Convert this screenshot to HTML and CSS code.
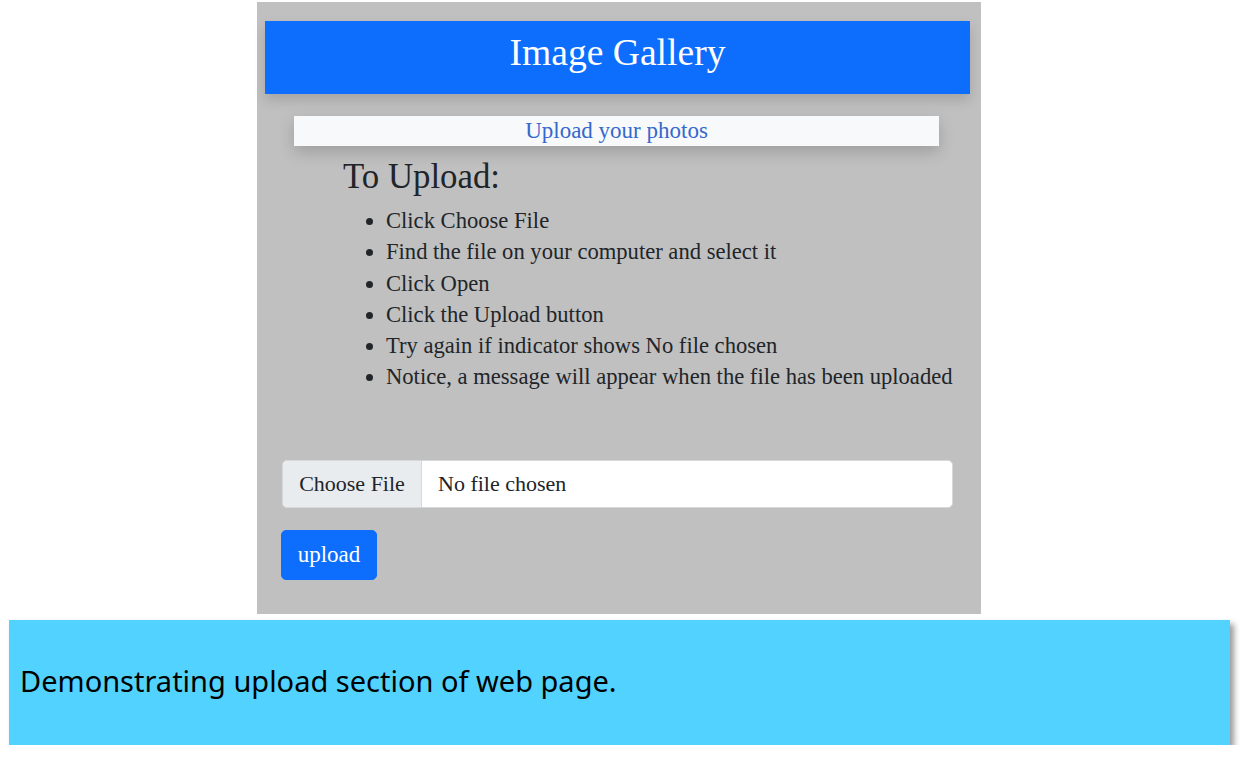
FILE: index.html
```html
<!DOCTYPE html>
<html lang="en">
<head>
<meta charset="utf-8">
<title>Image Gallery</title>
<link rel="stylesheet" href="styles.css">
</head>
<body>
<div class="panel">
  <header class="banner"><h1 class="title">Image Gallery</h1></header>
  <div class="subbar">Upload your photos</div>
  <section class="steps">
    <h3 class="steps-title">To Upload:</h3>
    <ul class="steps-list">
      <li>Click Choose File</li>
      <li>Find the file on your computer and select it</li>
      <li>Click Open</li>
      <li>Click the Upload button</li>
      <li>Try again if indicator shows No file chosen</li>
      <li>Notice, a message will appear when the file has been uploaded</li>
    </ul>
  </section>
  <form class="upload-form">
    <div class="file-input"><span class="file-btn">Choose File</span><span class="file-name">No file chosen</span></div>
    <button type="button" class="upload-btn">upload</button>
  </form>
</div>
<div class="caption">Demonstrating upload section of web page.</div>
</body>
</html>
```
FILE: styles.css
```css
html, body {
  margin: 0;
  padding: 0;
  background: #ffffff;
}
body {
  font-family: "Liberation Serif", "Times New Roman", serif;
  color: #212529;
}
.panel {
  width: 724px;
  margin: 2px 0 0 257px;
  background: #c0c0c0;
  padding: 19px 0 34px 0;
  box-sizing: border-box;
  display: flex;
  flex-direction: column;
}
.banner {
  margin: 0 11px 0 8px;
  height: 73px;
  box-sizing: border-box;
  padding-bottom: 9px;
  background: #0d6efd;
  display: flex;
  align-items: center;
  justify-content: center;
  box-shadow: 0 6px 12px rgba(0,0,0,0.15);
}
.title {
  margin: 0;
  font-weight: normal;
  font-size: 37.6px;
  color: #ffffff;
  line-height: 1;
}
.subbar {
  margin: 22px 42px 0 37px;
  height: 30px;
  background: #f8f9fa;
  color: #3568cc;
  font-size: 23px;
  line-height: 30px;
  text-align: center;
  box-shadow: 0 6px 16px rgba(0,0,0,0.18);
}
.steps {
  padding-left: 86px;
}
.steps-title {
  margin: 11px 0 0 0;
  font-weight: normal;
  font-size: 34.8px;
  line-height: 40px;
}
.steps-list {
  margin: 8px 0 0 0;
  padding-left: 43px;
  font-size: 22.6px;
  line-height: 31.3px;
}
.upload-form {
  margin-top: 67px;
  padding-left: 24px;
  display: flex;
  flex-direction: column;
  align-items: flex-start;
}
.file-input {
  width: 671px;
  height: 48px;
  margin-left: 1px;
  display: flex;
  background: #ffffff;
  border: 1px solid #d6d8db;
  border-radius: 5px;
  box-sizing: border-box;
  overflow: hidden;
  font-size: 22px;
}
.file-btn {
  width: 138px;
  background: #e9ecef;
  border-right: 1px solid #d6d8db;
  display: flex;
  align-items: center;
  justify-content: center;
}
.file-name {
  display: flex;
  align-items: center;
  padding-left: 16px;
}
.upload-btn {
  margin-top: 22px;
  width: 96px;
  height: 50px;
  background: #0d6efd;
  color: #ffffff;
  border: 1px solid #0d6efd;
  border-radius: 5px;
  font-family: "Liberation Serif", "Times New Roman", serif;
  font-size: 23px;
  padding: 0;
}
.caption {
  margin: 6px 0 0 9px;
  width: 1221px;
  height: 125px;
  box-sizing: border-box;
  background: #52d3ff;
  box-shadow: 4px 4px 6px rgba(0,0,0,0.4);
  display: flex;
  align-items: center;
  padding: 0 0 4px 11px;
  font-family: "Noto Sans", "Open Sans", sans-serif;
  font-size: 29px;
  color: #000000;
}
```
